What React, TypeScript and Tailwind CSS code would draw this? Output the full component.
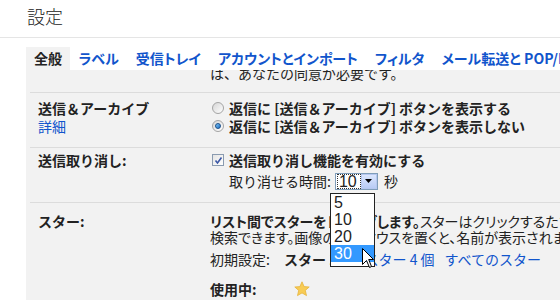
import React from 'react';

const jp = "font-['Noto_Sans_CJK_JP','Liberation_Sans',sans-serif]";

function Radio({ checked }: { checked?: boolean }) {
  return (
    <span className="ml-[2px] mr-[5px] flex h-[12px] w-[12px] items-center justify-center rounded-full border border-[#a4a4a4] bg-gradient-to-br from-[#d6d6d6] to-[#ffffff]">
      {checked && (
        <span className="h-[6px] w-[6px] rounded-full border border-[#1a4f8a] bg-gradient-to-br from-[#7cc4f4] to-[#1b6fc4]" />
      )}
    </span>
  );
}

function Checkbox() {
  return (
    <span className="ml-[2px] mr-[5px] flex h-[12px] w-[12px] items-center justify-center border border-[#8a9bb0] bg-gradient-to-br from-[#e4e4e4] to-[#ffffff]">
      <svg width="9" height="9" viewBox="0 0 9 9">
        <path d="M1.5 4.5 L3.5 7 L7.5 1.5" fill="none" stroke="#3b57a6" strokeWidth="1.6" />
      </svg>
    </span>
  );
}

function Cursor() {
  return (
    <svg
      className="absolute left-[362px] top-[248px]"
      width="14"
      height="22"
      viewBox="0 0 14 22"
    >
      <path
        d="M0.5 0.5 L0.5 16.5 L4.5 12.5 L7.5 19.5 L9.5 18.5 L6.7 11.5 L11.5 11.5 Z"
        fill="#ffffff"
        stroke="#000000"
        strokeWidth="1"
        strokeLinejoin="miter"
      />
    </svg>
  );
}

function Star() {
  return (
    <svg width="16" height="16" viewBox="0 0 16 16">
      <path
        d="M8 0.8 L10.1 5.6 L15.2 6 L11.3 9.4 L12.5 14.6 L8 11.9 L3.5 14.6 L4.7 9.4 L0.8 6 L5.9 5.6 Z"
        fill="#f8cc55"
        stroke="#e6b43c"
        strokeWidth="0.8"
      />
    </svg>
  );
}

export default function App() {
  const tabs = ['ラベル', '受信トレイ', 'アカウントとインポート', 'フィルタ', 'メール転送と POP/IMAP'];

  return (
    <div className={`relative h-[300px] w-[560px] overflow-hidden bg-white text-[14px] text-[#222] ${jp}`}>
      {/* header */}
      <div className="h-[38px] border-b border-[#e5e5e5] pl-[27px] pt-[2px] text-[18px] leading-[28px] font-light text-[#222]">
        設定
      </div>

      <div className="pl-[26px] pt-[9px]">
        {/* tabs */}
        <div className="flex h-[23px] items-center whitespace-nowrap font-bold [font-feature-settings:'palt']">
          <div className="h-[23px] shrink-0 bg-[#f2f2f2] px-[8px] leading-[23px] text-[#222]">全般</div>
          {tabs.map((t) => (
            <div key={t} className="shrink-0 px-[8.5px] leading-[23px] text-[#15c]">
              {t}
            </div>
          ))}
        </div>

        {/* panel */}
        <div className="bg-[#f2f2f2] pl-[4px]">
          <div className="h-[22px] overflow-hidden whitespace-nowrap pl-[180px]">
            <div className="-mt-[6px] leading-[18px]">は、あなたの同意が必要です。</div>
          </div>

          {/* send & archive */}
          <div className="flex border-t border-[#dcdcdc] pb-[12px] pt-[6px] whitespace-nowrap">
            <div className="w-[180px] shrink-0 pl-[8px]">
              <div className="font-bold leading-[18px]">送信＆アーカイブ</div>
              <div className="leading-[18px] text-[#15c]">詳細</div>
            </div>
            <div className="font-bold">
              <div className="flex h-[18px] items-center">
                <Radio />
                <span>返信に [送信＆アーカイブ] ボタンを表示する</span>
              </div>
              <div className="flex h-[18px] items-center">
                <Radio checked />
                <span>返信に [送信＆アーカイブ] ボタンを表示しない</span>
              </div>
            </div>
          </div>

          {/* undo send */}
          <div className="flex border-t border-[#dcdcdc] pb-[11px] pt-[3px] whitespace-nowrap">
            <div className="w-[180px] shrink-0 pl-[8px] font-bold leading-[18px]">送信取り消し:</div>
            <div>
              <div className="flex h-[18px] items-center font-bold">
                <Checkbox />
                <span>送信取り消し機能を有効にする</span>
              </div>
              <div className="mt-[2px] flex h-[20px] items-center pl-[19px]">
                <span className="leading-[18px]">取り消せる時間:</span>
                <div className="ml-[4px] flex h-[17px] w-[43px] items-center border border-[#7f9db9] bg-white">
                  <div className="ml-[1px] flex h-[15px] w-[24px] items-center border border-dotted border-[#333] font-['Liberation_Sans',sans-serif] text-[16px] leading-[15px]">
                    <span className="pl-[1px]">10</span>
                  </div>
                  <div className="ml-auto flex h-[15px] w-[16px] items-center justify-center border border-[#b6c8f0] bg-gradient-to-b from-[#dbe6fd] to-[#b8cbf5]">
                    <svg width="7" height="4" viewBox="0 0 7 4">
                      <path d="M0 0 L7 0 L3.5 4 Z" fill="#000" />
                    </svg>
                  </div>
                </div>
                <span className="ml-[6px] leading-[18px]">秒</span>
              </div>
            </div>
          </div>

          {/* stars */}
          <div className="flex h-[120px] border-t border-[#dcdcdc] pt-[10px] whitespace-nowrap">
            <div className="w-[180px] shrink-0 pl-[8px] font-bold leading-[16px]">スター:</div>
            <div className="shrink-0">
              <div className="leading-[16px] [font-feature-settings:'palt']">
                <span className="font-bold">リスト間でスターをドラッグします。</span>
                スターはクリックするたびに下の順で切り替わります。
              </div>
              <div className="leading-[16px] [font-feature-settings:'palt']">
                検索できます。画像の上にマウスを置くと、名前が表示されます。
              </div>
              <div className="mt-[5px] flex leading-[18px]">
                <span>初期設定:</span>
                <span className="ml-[14px] font-bold">スター 1 個</span>
                <span className="ml-[10px] text-[#15c]">スター 4 個</span>
                <span className="ml-[10px] text-[#15c]">すべてのスター</span>
              </div>
              <div className="mt-[12px] flex items-center leading-[18px]">
                <span className="font-bold">使用中:</span>
                <span className="ml-[37px]">
                  <Star />
                </span>
              </div>
            </div>
          </div>
        </div>
      </div>

      {/* open select list */}
      <div className="absolute left-[330px] top-[193px] w-[45px] border border-[#222] bg-white pb-[4px] font-['Liberation_Sans',sans-serif] text-[16px]">
        {['5', '10', '20', '30'].map((v) => (
          <div
            key={v}
            className={`h-[17px] pl-[3px] leading-[17px] ${v === '30' ? 'bg-[#3399ff] text-white' : 'text-[#222]'}`}
          >
            {v}
          </div>
        ))}
      </div>

      <Cursor />
    </div>
  );
}
